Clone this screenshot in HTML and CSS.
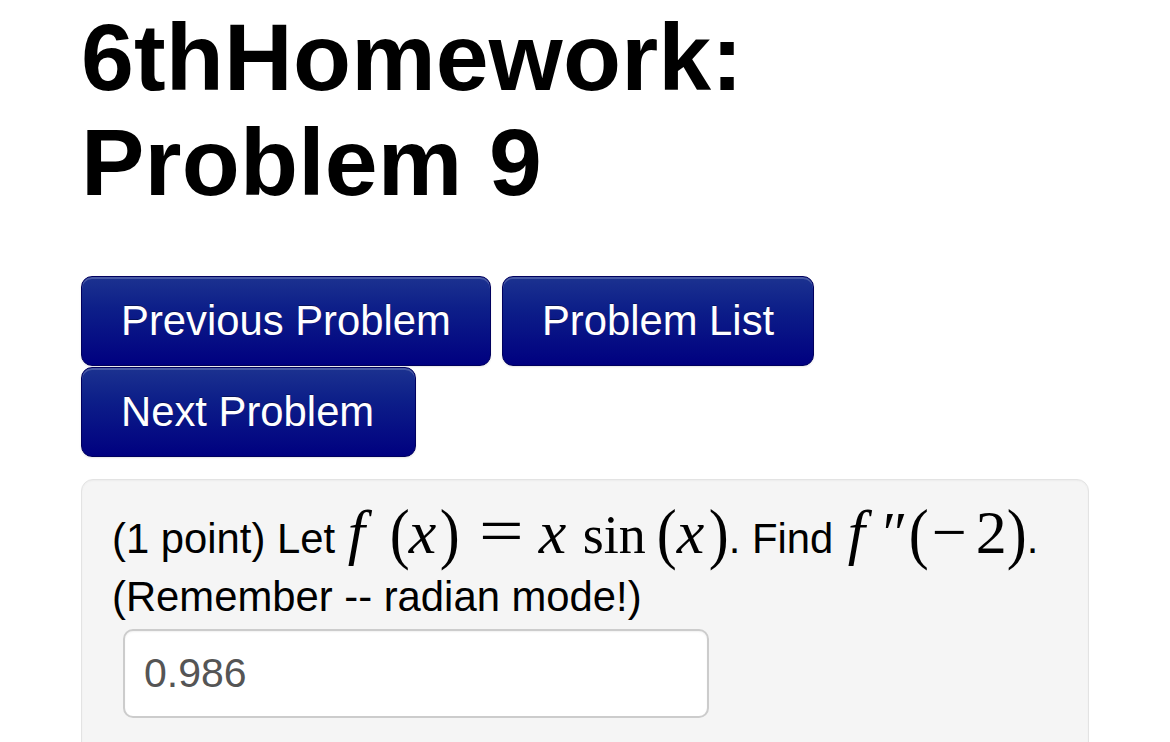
FILE: index.html
```html
<!DOCTYPE html>
<html lang="en">
<head>
<meta charset="utf-8">
<title>6thHomework: Problem 9</title>
<link rel="stylesheet" href="styles.css">
</head>
<body>
<div class="page">
  <h1 class="title">6thHomework:<br>Problem 9</h1>
  <div class="nav">
    <a class="btn btn-prev" href="#">Previous Problem</a>
    <a class="btn btn-list" href="#">Problem List</a>
    <a class="btn btn-next" href="#">Next Problem</a>
  </div>
  <div class="well">
    <p class="problem">(1 point) Let <span class="math"><i class="m mi c-f1">f</i><span class="m mp c-lp1">(</span><i class="m mi c-x1">x</i><span class="m mp c-rp1">)</span><span class="m c-eq"><span class="eq">=</span></span><i class="m mi c-x2">x</i><span class="m fn c-sin">sin</span><span class="m mp c-lp2">(</span><i class="m mi c-x3">x</i><span class="m mp c-rp2">)</span></span>. Find <span class="math"><i class="m mi c-f2">f</i><span class="m prime c-pr">″</span><span class="m mp c-lp3">(</span><span class="m c-minus">−</span><span class="m c-two">2</span><span class="m mp c-rp3">)</span></span>.<br>(Remember -- radian mode!)<br><input class="answer" type="text" value="0.986"></p>
  </div>
</div>
</body>
</html>
```

FILE: styles.css
```css
html, body {
  margin: 0;
  padding: 0;
  background: #ffffff;
}

body {
  font-family: "Liberation Sans", Arial, Helvetica, sans-serif;
  color: #000000;
}

.page {
  padding-left: 81px;
  width: 1008px;
}

.title {
  margin: 5px 0 0 0;
  font-size: 95px;
  line-height: 105px;
  font-weight: bold;
  letter-spacing: 0.2px;
}

.nav {
  margin-top: 61px;
  display: flex;
  flex-wrap: wrap;
  column-gap: 11px;
  row-gap: 1px;
  width: 760px;
}

.btn {
  display: block;
  box-sizing: border-box;
  height: 90px;
  padding: 0 39px;
  line-height: 88px;
  font-size: 41.8px;
  color: #ffffff;
  text-decoration: none;
  text-shadow: 0 -1px 0 rgba(0, 0, 0, 0.35);
  border: 1px solid #00005e;
  border-radius: 11px;
  background: linear-gradient(to bottom, #1c3290 0%, #0d1f89 35%, #000080 100%);
  box-shadow: inset 0 2px 0 rgba(255, 255, 255, 0.2), 0 1px 2px rgba(0, 0, 0, 0.1);
}

.btn-next {
  padding-right: 41px;
}

.well {
  margin-top: 22px;
  box-sizing: border-box;
  width: 1008px;
  min-height: 300px;
  background: #f5f5f5;
  border: 1px solid #e3e3e3;
  border-radius: 12px;
  padding: 30px 30px 0 30px;
  box-shadow: inset 0 1px 2px rgba(0, 0, 0, 0.04);
}

.problem {
  margin: 0;
  font-size: 41.8px;
  line-height: 58px;
}

.math {
  font-family: "Liberation Serif", "Times New Roman", serif;
  font-size: 62px;
  line-height: 0;
  white-space: nowrap;
}

.m {
  display: inline-block;
  line-height: 0;
  text-align: left;
  font-style: normal;
}

.mi {
  font-style: italic;
}

.mp {
  font-size: 60px;
  transform: scaleY(1.14);
}

.fn {
  font-size: 54px;
}

.eq {
  display: inline-block;
  font-size: 66px;
  transform: scaleX(1.2);
  transform-origin: left center;
}

/* cell widths follow the typeset spacing */
.c-f1 { width: 42px; margin-left: 1px; }
.c-lp1 { width: 19px; }
.c-x1 { width: 31px; }
.c-rp1 { width: 39px; }
.c-eq { width: 60px; }
.c-x2 { width: 44px; }
.c-sin { width: 74px; }
.c-lp2 { width: 20px; }
.c-x3 { width: 32px; }
.c-rp2 { width: 20px; }

.c-f2 { width: 31px; margin-left: 3px; }
.c-pr { width: 30px; font-size: 60px; font-style: italic; }
.c-lp3 { width: 23px; }
.c-minus { width: 44px; }
.c-two { width: 31px; }
.c-rp3 { width: 20px; }

.answer {
  box-sizing: border-box;
  margin: 3px 0 0 11px;
  width: 586px;
  height: 89px;
  padding: 0 19px;
  font-family: "Liberation Sans", Arial, Helvetica, sans-serif;
  font-size: 41px;
  color: #555555;
  background: #ffffff;
  border: 2px solid #cccccc;
  border-radius: 10px;
  vertical-align: top;
  box-shadow: inset 0 1px 2px rgba(0, 0, 0, 0.06);
  outline: none;
}
```
